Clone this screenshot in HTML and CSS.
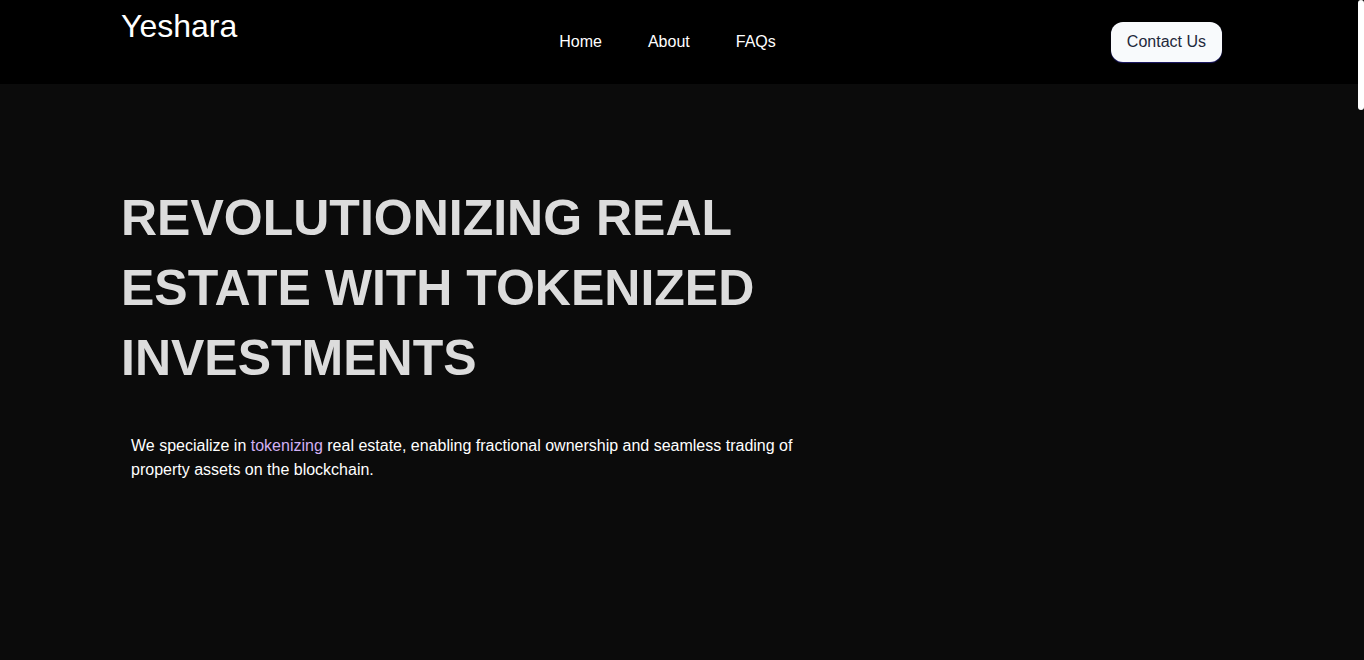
FILE: index.html
```html
<!DOCTYPE html>
<html lang="en">
<head>
<meta charset="utf-8">
<title>Yeshara</title>
<link rel="stylesheet" href="styles.css">
</head>
<body>
<header class="site-header">
  <a class="logo" href="#">Yeshara</a>
  <nav class="main-nav">
    <a href="#">Home</a>
    <a href="#">About</a>
    <a href="#">FAQs</a>
  </nav>
  <a class="contact-btn" href="#">Contact Us</a>
</header>
<main class="page">
  <section class="hero">
    <h1 class="hero-title">Revolutionizing Real Estate with Tokenized Investments</h1>
    <p class="hero-text">We specialize in <span class="accent">tokenizing</span> real estate, enabling fractional ownership and seamless trading of property assets on the blockchain.</p>
  </section>
</main>
<div class="scroll-thumb" aria-hidden="true"></div>
</body>
</html>
```

FILE: styles.css
```css
html {
  background: #0b0b0b;
}
body {
  margin: 0;
  background: #0b0b0b;
  font-family: "Liberation Sans", Arial, sans-serif;
  color: #ffffff;
}
a {
  text-decoration: none;
  color: inherit;
}
.site-header {
  display: flex;
  align-items: center;
  height: 84px;
  background: #000000;
  padding: 0 142px 0 121px;
  box-sizing: border-box;
}
.logo {
  align-self: flex-start;
  margin-top: 8px;
  font-size: 32px;
  color: #ffffff;
  line-height: 37px;
}
.main-nav {
  display: flex;
  gap: 46px;
  margin-left: 322px;
  font-size: 16px;
  line-height: 24px;
}
.main-nav a {
  color: #ffffff;
}
.contact-btn {
  margin-left: auto;
  background: #f8fafc;
  color: #1e293b;
  font-size: 16px;
  line-height: 24px;
  padding: 8px 16px;
  border-radius: 12px;
  box-shadow: 0 1px 1px #1e1b6b;
}
.page {
  min-height: 3876px;
}
.hero {
  padding: 99px 0 0 121px;
}
.hero-title {
  margin: 0;
  max-width: 680px;
  font-size: 50px;
  line-height: 70px;
  font-weight: 700;
  text-transform: uppercase;
  color: #dcdcdc;
}
.hero-text {
  margin: 41px 0 0 10px;
  max-width: 680px;
  font-size: 16px;
  line-height: 24px;
  color: #ffffff;
}
.accent {
  color: #d2b0f4;
}
.scroll-thumb {
  position: fixed;
  top: 0;
  right: 0;
  width: 6px;
  height: 110px;
  background: #ffffff;
  border-radius: 3px;
}
```
